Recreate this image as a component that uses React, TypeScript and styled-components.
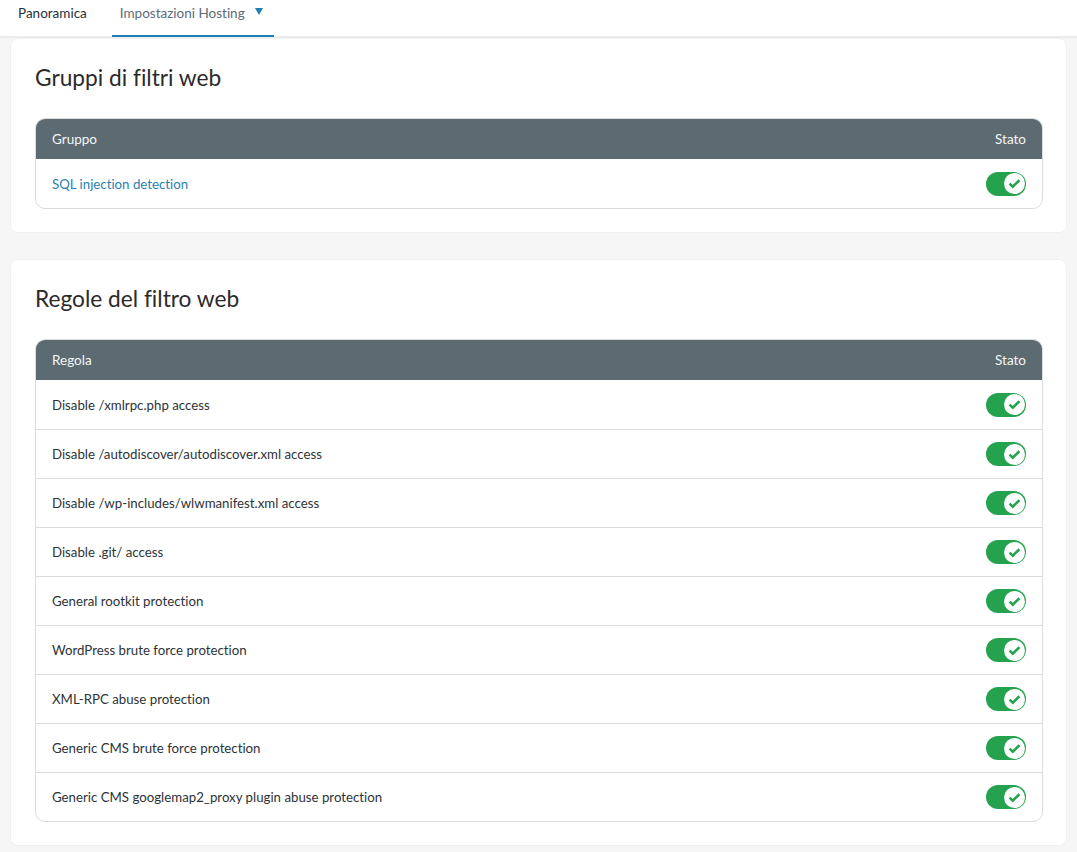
import React from 'react'
import styled, { createGlobalStyle } from 'styled-components'

const GlobalStyle = createGlobalStyle`
  html, body {
    margin: 0;
    padding: 0;
    background: #f6f6f6;
    font-family: 'Lato', 'Noto Sans', sans-serif;
    font-variant-ligatures: none;
    color: #2d2a2a;
  }
`

const Page = styled.div`
  height: 852px;
  overflow: hidden;
`

const TabBar = styled.nav`
  display: flex;
  height: 36px;
  padding-left: 2px;
  background: #fff;
  border-bottom: 2px solid #ececea;
`

const Tab = styled.div<{ $active?: boolean }>`
  display: flex;
  align-items: flex-start;
  gap: 10px;
  height: 37px;
  padding: 4px ${(p) => (p.$active ? '11px' : '16px')} 0 ${(p) => (p.$active ? '8px' : '16px')};
  margin-left: ${(p) => (p.$active ? '9px' : '0')};
  box-sizing: border-box;
  font-size: 13.5px;
  line-height: 18px;
  color: ${(p) => (p.$active ? '#5c6b77' : '#27313a')};
  border-bottom: ${(p) => (p.$active ? '2px solid #1f80b5' : 'none')};
`

const Caret = styled.span`
  width: 0;
  height: 0;
  margin-top: 4px;
  border-left: 4.5px solid transparent;
  border-right: 4.5px solid transparent;
  border-top: 7px solid #1f80b5;
`

const Content = styled.main`
  display: flex;
  flex-direction: column;
  gap: 26px;
  padding: 0 10px;
`

const Card = styled.section`
  padding: 25px 24px 24px 25px;
  background: #fff;
  border-radius: 8px;
  box-shadow: inset 0 0 0 1px #f0f0f0;
`

const Title = styled.h2`
  margin: 0 0 25px;
  font-size: 22.7px;
  font-weight: 400;
  line-height: 30px;
  color: #2d2a2a;
`

const TableWrap = styled.div`
  border: 1px solid #dcdcdc;
  border-radius: 10px;
  overflow: hidden;
`

const HeaderRow = styled.div`
  display: flex;
  align-items: center;
  justify-content: space-between;
  height: 40px;
  padding: 0 16px;
  background: #5c6a72;
  color: #f4f6f7;
  font-size: 13.5px;
`

const Row = styled.div`
  display: flex;
  align-items: center;
  justify-content: space-between;
  height: 49px;
  padding: 0 16px;
  box-sizing: border-box;
  font-size: 13.25px;
  color: #2d3338;
  & + & {
    border-top: 1px solid #dcdcdc;
  }
`

const GroupLink = styled.a`
  color: #2a7fb0;
  text-decoration: none;
`

const Toggle = styled.span`
  display: flex;
  align-items: center;
  justify-content: flex-end;
  width: 40px;
  height: 24px;
  padding-right: 1px;
  box-sizing: border-box;
  background: #25a24e;
  border-radius: 12px;
`

const Knob = styled.span`
  display: flex;
  align-items: center;
  justify-content: center;
  width: 21px;
  height: 21px;
  background: #fff;
  border-radius: 50%;
`

const Switch = () => (
  <Toggle>
    <Knob>
      <svg width="13" height="11" viewBox="0 0 13 11" fill="none">
        <path d="M1.6 5.6 L4.8 8.6 L11.4 2.2" stroke="#25a24e" strokeWidth="2.6" />
      </svg>
    </Knob>
  </Toggle>
)

const rules = [
  'Disable /xmlrpc.php access',
  'Disable /autodiscover/autodiscover.xml access',
  'Disable /wp-includes/wlwmanifest.xml access',
  'Disable .git/ access',
  'General rootkit protection',
  'WordPress brute force protection',
  'XML-RPC abuse protection',
  'Generic CMS brute force protection',
  'Generic CMS googlemap2_proxy plugin abuse protection',
]

export default function App() {
  return (
    <Page>
      <GlobalStyle />
      <TabBar>
        <Tab>Panoramica</Tab>
        <Tab $active>
          Impostazioni Hosting
          <Caret />
        </Tab>
      </TabBar>
      <Content>
        <Card>
          <Title>Gruppi di filtri web</Title>
          <TableWrap>
            <HeaderRow>
              <span>Gruppo</span>
              <span>Stato</span>
            </HeaderRow>
            <Row>
              <GroupLink href="#">SQL injection detection</GroupLink>
              <Switch />
            </Row>
          </TableWrap>
        </Card>
        <Card>
          <Title>Regole del filtro web</Title>
          <TableWrap>
            <HeaderRow>
              <span>Regola</span>
              <span>Stato</span>
            </HeaderRow>
            {rules.map((rule) => (
              <Row key={rule}>
                <span>{rule}</span>
                <Switch />
              </Row>
            ))}
          </TableWrap>
        </Card>
      </Content>
    </Page>
  )
}
